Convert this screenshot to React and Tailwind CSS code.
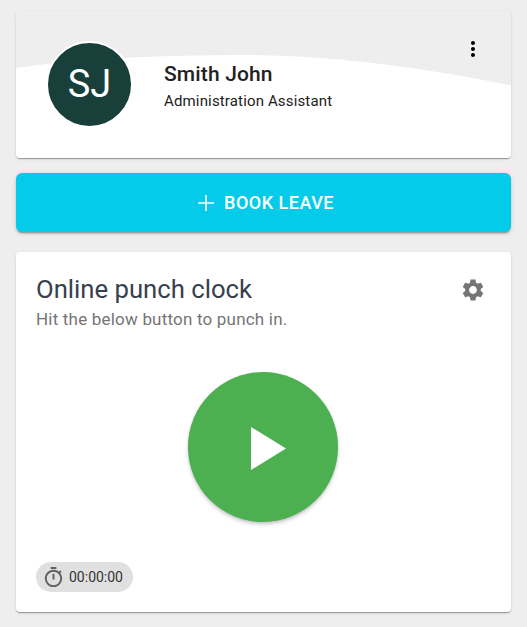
export default function App() {
  return (
    <div className="min-h-[627px] bg-[#eeeeee] px-4 pt-[11px] font-['Roboto',sans-serif]">
      <div className="relative h-[147px] overflow-hidden rounded bg-[#eeeeee] shadow-[0_2px_1px_-1px_rgba(0,0,0,0.2),0_1px_1px_0_rgba(0,0,0,0.14),0_1px_3px_0_rgba(0,0,0,0.12)]">
        <svg className="absolute inset-0" width="495" height="147" viewBox="0 0 495 147">
          <path d="M0 57C70 47 150 44 225 44C320 44 420 59 495 74.5L495 147L0 147Z" fill="#ffffff" />
        </svg>
        <div className="relative flex items-start pl-[30px] pt-[30px] pr-[26px]">
          <div className="flex h-[87px] w-[87px] shrink-0 items-center justify-center rounded-full border-2 border-white bg-[#183f3a] text-[38px] text-white">SJ</div>
          <div className="ml-[31px] pt-[19px]">
            <div className="text-[21px] font-medium leading-[28px] tracking-[0.15px] text-[#212121]">Smith John</div>
            <div className="mt-[3px] text-[15px] leading-5 tracking-[0.15px] text-[#212121]">Administration Assistant</div>
          </div>
          <svg className="-mt-[4px] ml-auto" width="24" height="24" viewBox="0 0 24 24" fill="#000000">
            <path d="M12 8c1.1 0 2-.9 2-2s-.9-2-2-2-2 .9-2 2 .9 2 2 2zm0 2c-1.1 0-2 .9-2 2s.9 2 2 2 2-.9 2-2-.9-2-2-2zm0 6c-1.1 0-2 .9-2 2s.9 2 2 2 2-.9 2-2-.9-2-2-2z" />
          </svg>
        </div>
      </div>

      <div className="mt-[15px] flex h-[59px] items-center justify-center rounded-md bg-[#04cbe9] pl-1 text-white shadow-[0_3px_1px_-2px_rgba(0,0,0,0.2),0_2px_2px_0_rgba(0,0,0,0.14),0_1px_5px_0_rgba(0,0,0,0.12)]">
        <svg width="18" height="18" viewBox="0 0 18 18" fill="none" stroke="#ffffff" strokeWidth="1.6">
          <path d="M9 1V17M1 9H17" />
        </svg>
        <span className="ml-[9px] text-[18px] font-medium tracking-[0.5px]">BOOK LEAVE</span>
      </div>

      <div className="mt-5 flex h-[360px] flex-col rounded bg-white px-5 shadow-[0_2px_1px_-1px_rgba(0,0,0,0.2),0_1px_1px_0_rgba(0,0,0,0.14),0_1px_3px_0_rgba(0,0,0,0.12)]">
        <div className="flex items-start justify-between pt-[20px]">
          <div>
            <div className="text-[25.7px] leading-[34px] text-[#37404f]">Online punch clock</div>
            <div className="mt-[3px] text-[17px] leading-[20px] tracking-[0.2px] text-[#757575]">Hit the below button to punch in.</div>
          </div>
          <svg className="mr-[5px] mt-[5px]" width="26" height="26" viewBox="0 0 24 24" fill="#757575">
            <path d="M19.14 12.94c.04-.3.06-.61.06-.94 0-.32-.02-.64-.07-.94l2.03-1.58c.18-.14.23-.41.12-.61l-1.92-3.32c-.12-.22-.37-.29-.59-.22l-2.39.96c-.5-.38-1.03-.7-1.62-.94l-.36-2.54c-.04-.24-.24-.41-.48-.41h-3.84c-.24 0-.43.17-.47.41l-.36 2.54c-.59.24-1.13.57-1.62.94l-2.39-.96c-.22-.08-.47 0-.59.22L2.74 8.87c-.12.21-.08.47.12.61l2.03 1.58c-.05.3-.09.63-.09.94s.02.64.07.94l-2.03 1.58c-.18.14-.23.41-.12.61l1.92 3.32c.12.22.37.29.59.22l2.39-.96c.5.38 1.03.7 1.62.94l.36 2.54c.05.24.24.41.48.41h3.84c.24 0 .44-.17.47-.41l.36-2.54c.59-.24 1.13-.56 1.62-.94l2.39.96c.22.08.47 0 .59-.22l1.92-3.32c.12-.22.07-.47-.12-.61l-2.01-1.58zM12 15.6c-1.98 0-3.6-1.62-3.6-3.6s1.62-3.6 3.6-3.6 3.6 1.62 3.6 3.6-1.62 3.6-3.6 3.6z" />
          </svg>
        </div>
        <div className="mt-[43px] flex justify-center pr-px">
          <div className="flex h-[150px] w-[150px] items-center justify-center rounded-full bg-[#4caf50] shadow-[0_3px_5px_-1px_rgba(0,0,0,0.2),0_1px_3px_0_rgba(0,0,0,0.12)]">
            <svg width="35" height="43" viewBox="0 0 35 43" fill="#ffffff" className="ml-[11px] mt-[2px]">
              <path d="M0 0L35 21.5L0 43Z" />
            </svg>
          </div>
        </div>
        <div className="mt-10 flex h-[30px] w-[97px] items-center rounded-full bg-[#e0e0e0] pl-[5.5px]">
          <svg width="23" height="23" viewBox="0 0 24 24" fill="#616161">
            <path d="M15 1H9v2h6V1zm-4 13h2V8h-2v6zm8.03-6.61l1.42-1.42c-.43-.51-.9-.99-1.41-1.41l-1.42 1.42C16.07 4.74 14.12 4 12 4c-4.97 0-9 4.03-9 9s4.02 9 9 9 9-4.03 9-9c0-2.12-.74-4.07-1.97-5.61zM12 20c-3.87 0-7-3.13-7-7s3.13-7 7-7 7 3.13 7 7-3.13 7-7 7z" />
          </svg>
          <span className="ml-[4.5px] text-[14px] text-[#333333]">00:00:00</span>
        </div>
      </div>
    </div>
  );
}
